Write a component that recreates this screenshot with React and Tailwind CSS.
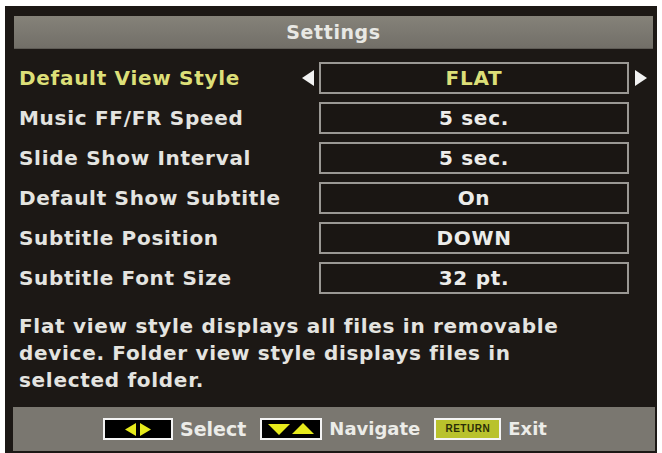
import React from "react";

const rows = [
  { label: "Default View Style", value: "FLAT", active: true },
  { label: "Music FF/FR Speed", value: "5 sec." },
  { label: "Slide Show Interval", value: "5 sec." },
  { label: "Default Show Subtitle", value: "On" },
  { label: "Subtitle Position", value: "DOWN" },
  { label: "Subtitle Font Size", value: "32 pt." },
];

function Row({ label, value, active }) {
  return (
    <div className="flex items-center h-[32px]">
      <div
        className={
          "w-[283px] pl-[14px] text-[20px] tracking-[0.7px] font-bold leading-none whitespace-nowrap " +
          (active ? "text-[#dcdf78]" : "text-[#e4e4e0]")
        }
      >
        {label}
      </div>
      <div className="w-[31px] h-full flex items-center justify-start pl-[14px]">
        {active && (
          <svg width="12" height="16" viewBox="0 0 12 16">
            <polygon points="12,0 12,16 0,8" fill="#f2f2f2" />
          </svg>
        )}
      </div>
      <div className="w-[310px] h-full border-2 border-[#9a9894] bg-[#1a1613] flex items-center justify-center">
        <span
          className={
            "text-[20px] tracking-[0.7px] font-bold leading-none " +
            (active ? "text-[#dcdf78]" : "text-[#ececea]")
          }
        >
          {value}
        </span>
      </div>
      <div className="w-[18px] h-full flex items-center justify-end">
        {active && (
          <svg width="12" height="16" viewBox="0 0 12 16">
            <polygon points="0,0 0,16 12,8" fill="#f2f2f2" />
          </svg>
        )}
      </div>
    </div>
  );
}

export default function App() {
  return (
    <div
      className="w-[662px] h-[453px] bg-white pt-[6px] pl-[5px] overflow-hidden"
      style={{ fontFamily: '"DejaVu Sans", Verdana, sans-serif' }}
    >
      <div className="w-[652px] h-[447px] bg-[#1c1815] flex flex-col pt-[10px]">
        <div className="ml-[9px] mr-[4px] h-[33px] bg-gradient-to-b from-[#858279] to-[#726f68] flex items-center justify-center border-b border-[#5e5b55]">
          <span className="text-[19px] text-[#e8e8e4] font-bold tracking-[0.6px]">
            Settings
          </span>
        </div>
        <div className="mt-[13px] flex flex-col gap-[8px]">
          {rows.map((r) => (
            <Row key={r.label} {...r} />
          ))}
        </div>
        <div className="mt-[19px] pl-[14px] text-[20px] tracking-[0.7px] font-bold leading-[27px] text-[#e4e4e0] whitespace-nowrap">
          Flat view style displays all files in removable
          <br />
          device. Folder view style displays files in
          <br />
          selected folder.
        </div>
        <div className="flex-1" />
        <div className="ml-[8px] mr-[2px] mb-[2px] h-[44px] bg-[#7a7770] flex items-center pl-[90px]">
          <div className="w-[70px] h-[22px] border-2 border-[#f4f4f4] bg-black flex items-center justify-center gap-[4px]">
            <svg width="11" height="13" viewBox="0 0 11 13">
              <polygon points="11,0 11,13 0,6.5" fill="#e6ea1c" />
            </svg>
            <svg width="11" height="13" viewBox="0 0 11 13">
              <polygon points="0,0 0,13 11,6.5" fill="#e6ea1c" />
            </svg>
          </div>
          <span className="ml-[7px] text-[19px] font-bold text-[#ecece8] leading-none">
            Select
          </span>
          <div className="ml-[14px] w-[62px] h-[22px] border-2 border-[#f4f4f4] bg-black flex items-center justify-center gap-[2px]">
            <svg width="22" height="12" viewBox="0 0 22 12">
              <polygon points="0,1 22,1 11,12" fill="#e6ea1c" />
            </svg>
            <svg width="22" height="12" viewBox="0 0 22 12">
              <polygon points="0,11 22,11 11,0" fill="#e6ea1c" />
            </svg>
          </div>
          <span className="ml-[7px] text-[18px] font-bold text-[#ecece8] leading-none">
            Navigate
          </span>
          <div className="ml-[14px] w-[67px] h-[22px] border-2 border-[#f4f4f4] bg-[#b9c22c] flex items-center justify-center">
            <span
              className="text-[#2b2e08] text-[10px] font-bold leading-none tracking-[0.5px]"
              style={{ fontFamily: '"Liberation Sans", Arial, sans-serif' }}
            >
              RETURN
            </span>
          </div>
          <span className="ml-[7px] text-[18px] font-bold text-[#ecece8] leading-none">
            Exit
          </span>
        </div>
      </div>
    </div>
  );
}
